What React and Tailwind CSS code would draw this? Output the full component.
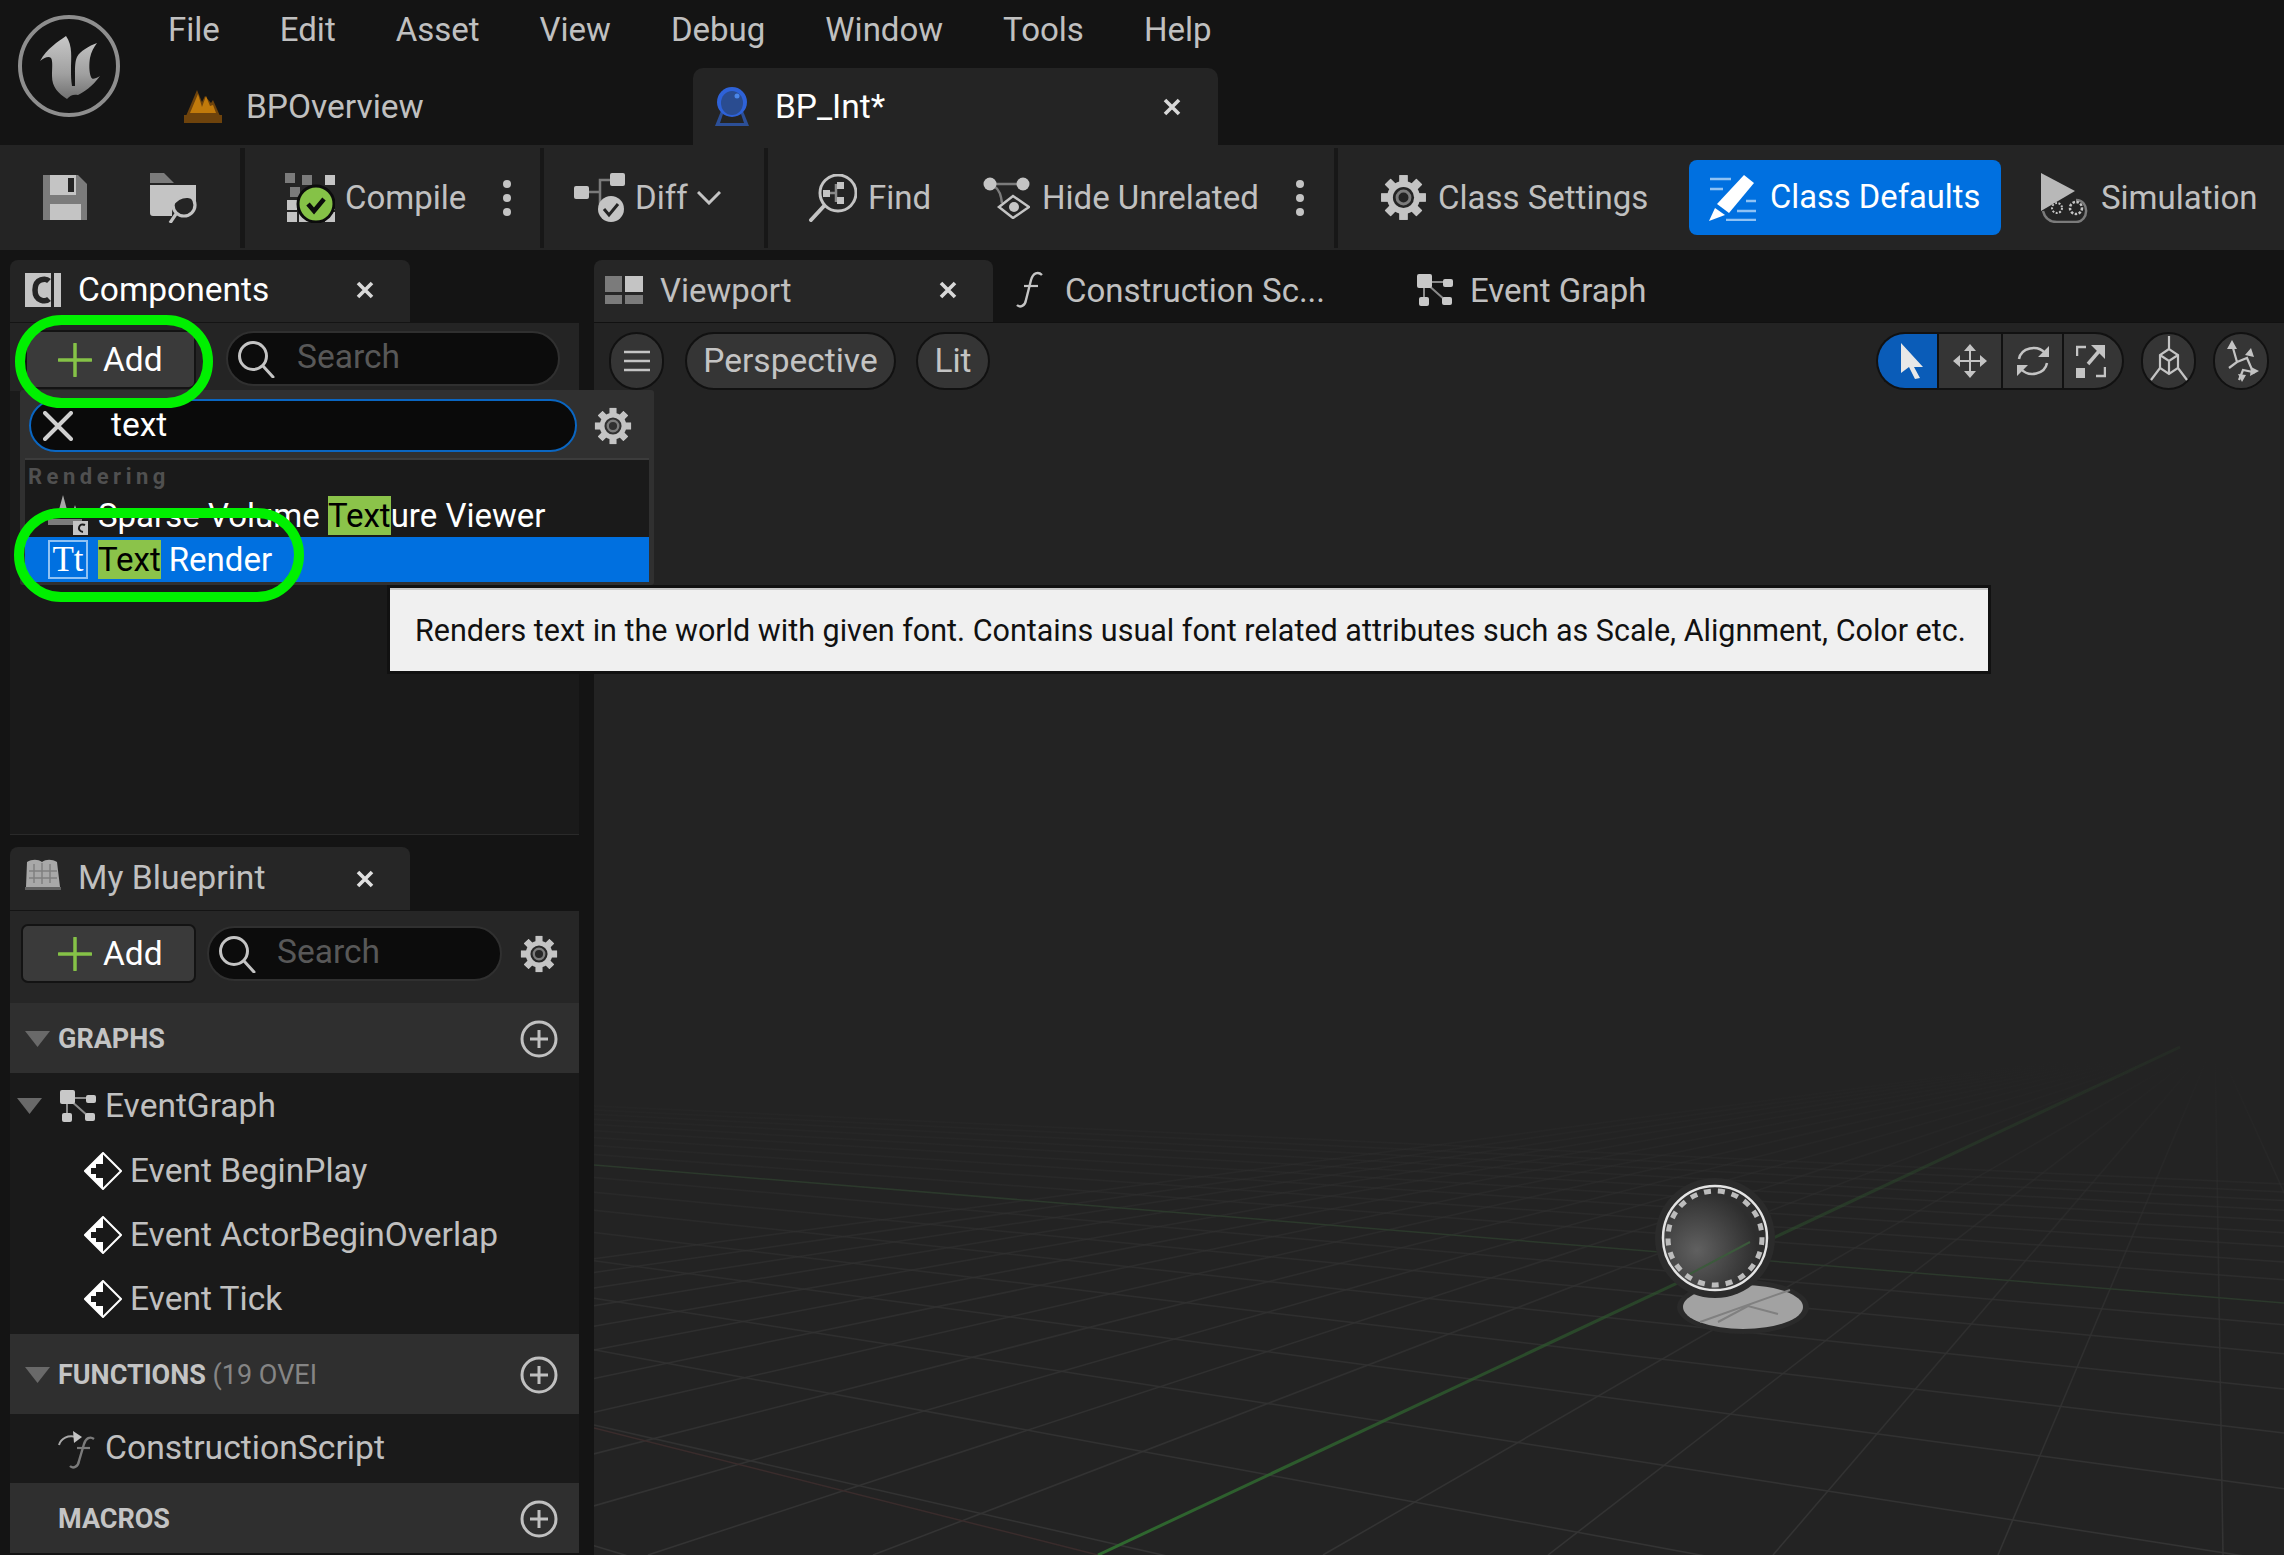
import React from 'react';

const Gear = ({ size = 40, color = '#c4c4c4', hub = '#242424' }) => (
  <svg width={size} height={size} viewBox="0 0 40 40" className="shrink-0">
    {[0, 45, 90, 135, 180, 225, 270, 315].map((a) => (
      <rect key={a} x="16.5" y="1" width="7" height="38" fill={color} transform={`rotate(${a} 20 20)`} />
    ))}
    <circle cx="20" cy="20" r="14" fill={color} />
    <circle cx="20" cy="20" r="9" fill={hub} />
    <circle cx="20" cy="20" r="5.5" fill="none" stroke="#7c7c7c" strokeWidth="2.5" />
  </svg>
);

const Magnifier = ({ size = 38 }) => (
  <svg width={size} height={size} viewBox="0 0 38 38" fill="none" stroke="#c4c4c4" strokeWidth="3" className="shrink-0">
    <circle cx="16" cy="16" r="13.5" />
    <path d="M26 26l10 11" strokeLinecap="round" />
  </svg>
);

const PlusIcon = () => (
  <svg width="34" height="34" viewBox="0 0 34 34" className="shrink-0">
    <path d="M17 1v32M1 17h32" stroke="#85c247" strokeWidth="3.5" strokeLinecap="round" />
  </svg>
);

const Dots = () => (
  <svg width="10" height="38" viewBox="0 0 10 38" className="shrink-0">
    <circle cx="5" cy="5" r="4" fill="#c4c4c4" />
    <circle cx="5" cy="19" r="4" fill="#c4c4c4" />
    <circle cx="5" cy="33" r="4" fill="#c4c4c4" />
  </svg>
);

const CloseX = ({ color = '#d8d8d8' }) => (
  <svg width="18" height="18" viewBox="0 0 18 18" className="shrink-0">
    <path d="M2 2l14 14M16 2L2 16" stroke={color} strokeWidth="3.6" />
  </svg>
);

const Triangle = () => (
  <svg width="25" height="16" viewBox="0 0 25 16" className="shrink-0">
    <path d="M0 0h25L12.5 16z" fill="#696969" />
  </svg>
);

const AddCircle = () => (
  <svg width="38" height="38" viewBox="0 0 38 38" fill="none" className="shrink-0">
    <circle cx="19" cy="19" r="17" stroke="#c0c0c0" strokeWidth="3" />
    <path d="M19 10v18M10 19h18" stroke="#c0c0c0" strokeWidth="3" />
  </svg>
);

const GraphIcon = ({ w = 36, h = 32 }) => (
  <svg width={w} height={h} viewBox="0 0 36 32" className="shrink-0">
    <path d="M8 8h24M7 10v14M10 10l18 16" stroke="#8a8a8a" strokeWidth="2" fill="none" />
    <rect x="0" y="0" width="15" height="14" rx="2" fill="#c8c8c8" />
    <rect x="26" y="5" width="10" height="8" rx="2" fill="#c8c8c8" />
    <rect x="2" y="23" width="10" height="9" rx="2" fill="#c8c8c8" />
    <rect x="25" y="23" width="10" height="8" rx="2" fill="#c8c8c8" />
  </svg>
);

const EventDiamond = () => (
  <svg width="38" height="38" viewBox="0 0 38 38" className="shrink-0">
    <path d="M19 1l18 18-18 18L1 19z" fill="#191919" stroke="#fff" strokeWidth="2" />
    <path d="M19 1L1 19l18 18V26h-7v-4H7v-6h5v-4h7z" fill="#fff" />
  </svg>
);

const FunctionF = ({ color = '#c4c4c4', w = 30, h = 38 }) => (
  <svg width={w} height={h} viewBox="0 0 30 38" fill="none" stroke={color} className="shrink-0">
    <path d="M27 4c-4-4-9-2-11 5l-5 20c-1 6-6 8-9 5" strokeWidth="2.4" />
    <path d="M9 15h14" strokeWidth="2.2" />
  </svg>
);

const BlueprintBall = () => (
  <svg width="40" height="40" viewBox="0 0 40 40" className="shrink-0">
    <path d="M9 24L3 39h34l-6-15z" fill="#2c4f97" />
    <path d="M11 27L8 36h24l-3-9z" fill="#242424" />
    <circle cx="20" cy="15" r="15" fill="#2e62d8" />
    <ellipse cx="20" cy="16" rx="11" ry="12" fill="#2a4c90" />
    <circle cx="25" cy="9" r="2.5" fill="#4a86ea" />
  </svg>
);

const LevelIcon = () => (
  <svg width="40" height="34" viewBox="0 0 40 34" className="shrink-0">
    <path d="M3 26L14 0l5 12 3-6 6 7 2-3 7 16z" fill="#6e430c" />
    <path d="M7 23L15 4l4 13 4-11 4 10 3-1 3 8z" fill="#c17a0b" />
    <path d="M1 25h38v8H1z" fill="#6e430c" />
  </svg>
);

const Logo = () => (
  <svg width="104" height="104" viewBox="0 0 104 104" className="shrink-0">
    <defs>
      <linearGradient id="logoFill" x1="0" y1="0" x2="0" y2="1">
        <stop offset="0" stopColor="#c8c8c8" />
        <stop offset="0.6" stopColor="#a0a0a0" />
        <stop offset="1" stopColor="#707070" />
      </linearGradient>
    </defs>
    <circle cx="52" cy="52" r="49" fill="#151515" stroke="#8e8e8e" strokeWidth="4" />
    <path
      d="M49 22C41 28 30 34 23 47C28 43 32 42 34 44C36 47 35 54 35 62C35 73 41 79 50 85C53 81 57 80 61 81C67 78 75 73 83 62C78 65 75 66 74 63C72 58 72 50 73 44C74 38 77 33 80 29C72 32 63 37 60 43C58 47 58 54 58 60L58 72L55 72C54 66 54 62 54 56C54 44 56 32 49 22Z"
      fill="url(#logoFill)"
    />
  </svg>
);

const SaveIcon = () => (
  <svg width="44" height="45" viewBox="0 0 44 45" className="shrink-0">
    <path d="M0 0h35l9 9v36H0z" fill="#7b7b7b" />
    <path d="M7 0h26v20H7z" fill="#c4c4c4" />
    <path d="M25 3h6v14h-6z" fill="#242424" />
    <path d="M7 29h31v16H7z" fill="#c4c4c4" />
  </svg>
);

const BrowseIcon = () => (
  <svg width="50" height="50" viewBox="0 0 50 50" fill="none" className="shrink-0">
    <path d="M0 0h14l10 10H0z" fill="#7b7b7b" />
    <path d="M0 12h46v16a15 15 0 0 0-24 14v1H3a3 3 0 0 1-3-3z" fill="#c4c4c4" />
    <circle cx="34" cy="32" r="11" stroke="#c4c4c4" strokeWidth="3.2" />
    <path d="M26 41l-6 9" stroke="#c4c4c4" strokeWidth="3.2" />
  </svg>
);

const CompileIcon = () => (
  <svg width="50" height="50" viewBox="0 0 50 50" className="shrink-0">
    {[
      [0, 0, '#7b7b7b'], [17, 2, '#7b7b7b'], [40, 2, '#c4c4c4'],
      [5, 14, '#7b7b7b'], [2, 27, '#c4c4c4'], [2, 39, '#c4c4c4'], [40, 27, '#c4c4c4'], [40, 39, '#c4c4c4'], [14, 39, '#c4c4c4'],
    ].map(([x, y, c]) => (
      <rect key={`${x}-${y}`} x={x} y={y} width="10" height="10" fill={c} />
    ))}
    <ellipse cx="31" cy="31" rx="18" ry="18" fill="#85c247" stroke="#0c0c0c" strokeWidth="3" />
    <path d="M23 31l6 7 10-12" stroke="#0c0c0c" strokeWidth="4.5" fill="none" />
  </svg>
);

const DiffIcon = () => (
  <svg width="51" height="50" viewBox="0 0 51 50" className="shrink-0">
    <path d="M14 19h12V7h12M26 19v12" stroke="#7b7b7b" strokeWidth="2.5" fill="none" />
    <rect x="0" y="13" width="15" height="13" rx="2" fill="#c4c4c4" />
    <rect x="36" y="0" width="15" height="13" rx="2" fill="#c4c4c4" />
    <circle cx="37" cy="36" r="13" fill="#c4c4c4" />
    <path d="M30 36l5 6 9-11" stroke="#242424" strokeWidth="3" fill="none" />
  </svg>
);

const FindIcon = () => (
  <svg width="49" height="48" viewBox="0 0 49 48" fill="none" className="shrink-0">
    <circle cx="30" cy="19" r="18" stroke="#c4c4c4" strokeWidth="3" />
    <path d="M16 32L3 46" stroke="#c4c4c4" strokeWidth="4" strokeLinecap="round" />
    <rect x="15" y="16" width="7" height="7" fill="#c4c4c4" />
    <path d="M22 19h6M28 10v18" stroke="#8a8a8a" strokeWidth="2.5" />
    <rect x="29" y="8" width="7" height="7" fill="#c4c4c4" />
    <rect x="29" y="23" width="7" height="7" fill="#c4c4c4" />
  </svg>
);

const HideIcon = () => (
  <svg width="47" height="42" viewBox="0 0 47 42" fill="none" className="shrink-0">
    <path d="M8 7h34M11 9c6 4 7 10 8 17" stroke="#7b7b7b" strokeWidth="2.5" />
    <circle cx="7" cy="7" r="6.5" fill="#c4c4c4" />
    <circle cx="40" cy="7" r="6.5" fill="#c4c4c4" />
    <path d="M16 30l14-11 16 11-16 11z" stroke="#c4c4c4" strokeWidth="2.5" />
    <circle cx="31" cy="30" r="5" fill="#c4c4c4" />
  </svg>
);

const ClassDefaultsIcon = () => (
  <svg width="49" height="46" viewBox="0 0 49 46" className="shrink-0">
    <g stroke="#8fc2f4" strokeWidth="2.4">
      <path d="M2 4h21M2 14h13M38 26h10M29 36h19M18 45h30" />
    </g>
    <path d="M36 0l10 8-25 30-12-9z" fill="#fff" />
    <path d="M7 33l10 7-16 6z" fill="#fff" />
  </svg>
);

const SimIcon = () => (
  <svg width="50" height="50" viewBox="0 0 50 50" fill="none" className="shrink-0">
    <path d="M1 0l34 18L1 38z" fill="#b8b8b8" />
    <path d="M3 38c2 8 8 11 14 11h19c13 0 14-22 0-22" stroke="#7b7b7b" strokeWidth="2.5" />
    <circle cx="17" cy="35" r="5.5" fill="#242424" />
    <circle cx="17" cy="35" r="5" stroke="#c4c4c4" strokeWidth="2" strokeDasharray="2 1.5" />
    <circle cx="36" cy="35" r="6" stroke="#c4c4c4" strokeWidth="2.5" strokeDasharray="2.5 1.5" />
  </svg>
);

const ComponentsIcon = () => (
  <svg width="36" height="36" viewBox="0 0 36 36" className="shrink-0">
    <path d="M0 1h36v34H0z" fill="#c4c4c4" />
    <path d="M24 9c-3-3-14-3-14 9s11 12 14 9" stroke="#242424" strokeWidth="5.5" fill="none" />
    <path d="M26 0h3v36h-3z" fill="#242424" />
  </svg>
);

const BookIcon = () => (
  <svg width="38" height="34" viewBox="0 0 38 34" className="shrink-0">
    <path d="M3 4c5-3 11-3 15 0 4-3 10-3 15 0l3 25H2z" fill="#a8a8a8" />
    <path d="M10 6v19M18 5v21M26 6v19M5 13h28M5 20h28" stroke="#808080" strokeWidth="1.5" />
    <path d="M1 29h36v3H1z" fill="#606060" />
  </svg>
);

const ViewportIcon = () => (
  <svg width="38" height="28" viewBox="0 0 38 28" className="shrink-0">
    <rect width="17" height="16" fill="#7b7b7b" />
    <rect x="20" width="18" height="16" fill="#c4c4c4" />
    <rect y="19" width="17" height="9" fill="#7b7b7b" />
    <rect x="20" y="19" width="18" height="9" fill="#7b7b7b" />
  </svg>
);

const ConstructionIcon = () => (
  <svg width="37" height="40" viewBox="0 0 37 40" fill="none" className="shrink-0">
    <path d="M1 16c2-7 9-10 17-8" stroke="#a8a8a8" strokeWidth="2" />
    <path d="M15 2l9 6-8 6z" fill="#c4c4c4" />
    <path d="M36 10c-4-3-8-1-10 5l-5 17c-1 6-6 8-9 5" stroke="#7b7b7b" strokeWidth="2.4" />
    <path d="M19 19h13" stroke="#7b7b7b" strokeWidth="2.2" />
  </svg>
);

const SparseIcon = () => (
  <svg width="42" height="40" viewBox="0 0 42 40" className="shrink-0">
    <path d="M15 0l6 22H9z" fill="#a8a8a8" />
    <path d="M27 10l4 12h-8z" fill="#a8a8a8" />
    <path d="M0 24h34v6H0z" fill="#7b7b7b" />
    <rect x="25" y="26" width="15" height="14" fill="#c4c4c4" />
    <path d="M37 30c-6-3-9 6-2 7" stroke="#1a1a1a" strokeWidth="2" fill="none" />
  </svg>
);

function Btn({ className = '', children }) {
  return (
    <div className={`bg-[#353535] border-2 border-[#111] flex items-center justify-center text-[#c4c4c4] ${className}`}>
      {children}
    </div>
  );
}

function AddButton({ className }) {
  return (
    <div className={`h-[59px] bg-[#3a3a3a] border-2 border-[#131313] rounded-[7px] flex items-center gap-[11px] text-white ${className}`}>
      <PlusIcon />
      <span>Add</span>
    </div>
  );
}

function SearchBox({ className, gap }) {
  return (
    <div className={`h-[55px] bg-[#0c0c0c] border-2 border-[#303030] rounded-full flex items-center pl-[9px] text-[#585858] ${className}`}>
      <Magnifier />
      <span className={`${gap} mb-[3px]`}>Search</span>
    </div>
  );
}

function SectionHeader({ height, arrow = true, children }) {
  return (
    <div className={`${height} bg-[#2f2f2f] flex items-center pl-[15px] pr-[21px] pt-[2px]`}>
      <div className="w-[33px]">{arrow && <Triangle />}</div>
      <div className="text-[27px] font-bold text-[#c4c4c4] flex-1 whitespace-nowrap">{children}</div>
      <AddCircle />
    </div>
  );
}

function EventRow({ label }) {
  return (
    <div className="h-[64px] flex items-center pl-[74px] gap-[8px] text-[#c0c0c0] text-[33.5px]">
      <EventDiamond />
      <span>{label}</span>
    </div>
  );
}

// perspective floor, page coordinates
function FloorGrid() {
  const vpA = [2215, 1040];
  const vpB = [-1155, 1025];
  const linesA = [];
  for (let k = -12; k <= 6; k++) {
    if (k === 0) continue;
    const bx = 1098 + 225 * k;
    linesA.push([vpA[0], vpA[1], bx, 1555]);
  }
  const linesB = [];
  for (let k = -9; k <= 9; k++) {
    if (k === 0) continue;
    const y = 1025 + 1 / (0.00714 - 0.00058 * k);
    const slope = (y - vpB[1]) / (594 - vpB[0]);
    linesB.push([594, y, 2284, y + slope * 1690]);
  }
  return (
    <svg className="absolute inset-0" width="1690" height="1232" viewBox="594 323 1690 1232">
      <defs>
        <linearGradient id="gridFade" gradientUnits="userSpaceOnUse" x1="0" y1="1060" x2="0" y2="1555">
          <stop offset="0" stopColor="#2f2f2f" stopOpacity="0" />
          <stop offset="0.5" stopColor="#303030" stopOpacity="0.85" />
          <stop offset="1" stopColor="#343434" />
        </linearGradient>
        <linearGradient id="greenFade" gradientUnits="userSpaceOnUse" x1="0" y1="1050" x2="0" y2="1555">
          <stop offset="0" stopColor="#2c4a2c" stopOpacity="0.2" />
          <stop offset="1" stopColor="#2f6a2f" />
        </linearGradient>
        <radialGradient id="ballFill" gradientUnits="userSpaceOnUse" cx="1697" cy="1250" r="60">
          <stop offset="0" stopColor="#606060" />
          <stop offset="1" stopColor="#2e2e2e" />
        </radialGradient>
      </defs>
      {linesA.map((l, i) => (
        <line key={i} x1={l[0]} y1={l[1]} x2={l[2]} y2={l[3]} stroke="url(#gridFade)" strokeWidth="1.5" />
      ))}
      {linesB.map((l, i) => (
        <line key={i} x1={l[0]} y1={l[1]} x2={l[2]} y2={l[3]} stroke="url(#gridFade)" strokeWidth="1.5" />
      ))}
      <line x1="594" y1="1428" x2="1098" y2="1555" stroke="#3a2c2c" strokeWidth="1.5" />
      <line x1="594" y1="1165" x2="2284" y2="1303" stroke="#2c392c" strokeWidth="1.5" />
      <line x1="1098" y1="1555" x2="2180" y2="1047" stroke="url(#greenFade)" strokeWidth="3" />
      <ellipse cx="1743" cy="1307" rx="66" ry="27" fill="#2a2a2a" />
      <ellipse cx="1743" cy="1307" rx="60" ry="22" fill="#a2a2a2" />
      <path d="M1718 1322l30-16 30 8M1700 1322l90-32" stroke="#808080" strokeWidth="2" fill="none" />
      <circle cx="1715" cy="1238" r="60" fill="#2b2b2b" />
      <circle cx="1715" cy="1238" r="53" fill="url(#ballFill)" />
      <circle cx="1715" cy="1238" r="52" fill="none" stroke="#e4e4e4" strokeWidth="2.5" />
      <circle cx="1715" cy="1238" r="47" fill="none" stroke="#bcbcbc" strokeWidth="5" strokeDasharray="7 7" />
      <path d="M1690 1274l60-32" stroke="#3c5a3c" strokeWidth="2" />
    </svg>
  );
}

export default function App() {
  return (
    <div className="relative w-[2284px] h-[1555px] overflow-hidden bg-[#141414] font-['Roboto',sans-serif] text-[33.5px] leading-none">
      {/* title bar */}
      <div className="h-[145px] flex">
        <div className="w-[168px] pl-[17px] pt-[14px]">
          <Logo />
        </div>
        <div className="flex-1 flex flex-col">
          <div className="h-[68px] flex items-center gap-[60px] text-[#c0c0c0] pb-[10px] text-[33px]">
            {['File', 'Edit', 'Asset', 'View', 'Debug', 'Window', 'Tools', 'Help'].map((m) => (
              <span key={m}>{m}</span>
            ))}
          </div>
          <div className="flex-1 flex">
            <div className="w-[525px] flex items-center pl-[15px] gap-[23px] text-[#c0c0c0] pt-[1px]">
              <LevelIcon />
              <span>BPOverview</span>
            </div>
            <div className="w-[525px] bg-[#242424] rounded-t-[10px] flex items-center pl-[19px] pr-[37px] text-white">
              <BlueprintBall />
              <span className="ml-[23px] flex-1">BP_Int*</span>
              <CloseX />
            </div>
          </div>
        </div>
      </div>

      {/* main toolbar */}
      <div className="h-[105px] bg-[#242424] flex items-center text-[#c0c0c0] text-[33px]">
        <div className="w-[240px] flex items-center pl-[43px] gap-[63px]">
          <SaveIcon />
          <BrowseIcon />
        </div>
        <div className="w-[5px] h-[100px] bg-[#171717]" />
        <div className="w-[295px] flex items-center pl-[40px] gap-[10px]">
          <CompileIcon />
          <span className="w-[147px]">Compile</span>
          <Dots />
        </div>
        <div className="w-[4px] h-[100px] bg-[#171717]" />
        <div className="w-[220px] flex items-center pl-[30px] gap-[10px]">
          <DiffIcon />
          <span className="w-[52px]">Diff</span>
          <svg width="24" height="14" viewBox="0 0 24 14" fill="none" stroke="#c4c4c4" strokeWidth="3">
            <path d="M1 1l11 11L23 1" />
          </svg>
        </div>
        <div className="w-[4px] h-[100px] bg-[#171717]" />
        <div className="w-[566px] flex items-center pl-[40px]">
          <FindIcon />
          <span className="ml-[11px] w-[115px]">Find</span>
          <HideIcon />
          <span className="ml-[12px] w-[253px]">Hide Unrelated</span>
          <Dots />
        </div>
        <div className="w-[4px] h-[100px] bg-[#171717]" />
        <div className="flex-1 flex items-center pl-[42px]">
          <Gear size={47} />
          <span className="ml-[11px] w-[251px]">Class Settings</span>
          <div className="w-[312px] h-[75px] bg-[#0070e0] rounded-[8px] flex items-center pl-[19px] gap-[13px] text-white">
            <ClassDefaultsIcon />
            <span className="text-[32.7px]">Class Defaults</span>
          </div>
          <div className="ml-[39px]">
            <SimIcon />
          </div>
          <span className="ml-[11px]">Simulation</span>
        </div>
      </div>

      <div className="h-[1305px] flex">
        {/* left column */}
        <div className="w-[594px] pl-[10px] pr-[15px] pt-[10px] flex flex-col">
          <div className="w-[400px] h-[62px] bg-[#242424] rounded-t-[8px] flex items-center pl-[15px] pr-[36px] text-white pb-[2px]">
            <ComponentsIcon />
            <span className="ml-[17px] flex-1">Components</span>
            <CloseX />
          </div>
          <div className="h-[68px] mt-[1px] bg-[#242424] flex items-start pt-[7px] pl-[15px] gap-[30px]">
            <AddButton className="w-[171px] pl-[31px]" />
            <SearchBox className="w-[334px] mt-[1px]" gap="ml-[22px]" />
          </div>
          <div className="h-[444px] bg-[#1a1a1a] border-b border-[#2a2a2a]" />

          <div className="w-[400px] h-[63px] mt-[12px] bg-[#262626] rounded-t-[8px] flex items-center pl-[14px] pr-[36px] text-[#c0c0c0] text-[33.7px]">
            <div className="mb-[8px]">
              <BookIcon />
            </div>
            <span className="ml-[16px] flex-1 mb-[2px]">My Blueprint</span>
            <CloseX color="#e0e0e0" />
          </div>
          <div className="h-[92px] mt-[1px] bg-[#262626] flex items-center pl-[11px] pr-[21px] pb-[7px]">
            <AddButton className="w-[175px] pl-[35px]" />
            <SearchBox className="w-[295px] ml-[11px]" gap="ml-[21px]" />
            <div className="ml-auto">
              <Gear size={38} hub="#262626" />
            </div>
          </div>
          <SectionHeader height="h-[70px]">GRAPHS</SectionHeader>
          <div className="h-[261px] bg-[#1a1a1a] text-[#c0c0c0]">
            <div className="h-[66px] flex items-center pl-[7px] gap-[18px] text-[33.5px]">
              <Triangle />
              <GraphIcon />
              <span className="ml-[-9px]">EventGraph</span>
            </div>
            <EventRow label="Event BeginPlay" />
            <EventRow label="Event ActorBeginOverlap" />
            <EventRow label="Event Tick" />
          </div>
          <SectionHeader height="h-[80px]">
            FUNCTIONS <span className="font-normal text-[#858585]">(19 OVEI</span>
          </SectionHeader>
          <div className="h-[69px] bg-[#1a1a1a] flex items-center pl-[48px] gap-[10px] text-[#c0c0c0] text-[33.7px]">
            <ConstructionIcon />
            <span className="mb-[2px]">ConstructionScript</span>
          </div>
          <SectionHeader height="h-[70px]" arrow={false}>MACROS</SectionHeader>
        </div>

        {/* viewport */}
        <div className="flex-1 flex flex-col">
          <div className="h-[72px] pt-[10px] flex text-[33px]">
            <div className="w-[399px] bg-[#262626] rounded-t-[8px] flex items-center pl-[11px] pr-[36px] text-[#c0c0c0] pb-[2px]">
              <ViewportIcon />
              <span className="ml-[17px] flex-1">Viewport</span>
              <CloseX />
            </div>
            <div className="w-[424px] flex items-center pl-[22px] text-[#c0c0c0] pb-[2px]">
              <FunctionF />
              <span className="ml-[20px]">Construction Sc...</span>
            </div>
            <div className="flex items-center text-[#c0c0c0] pb-[2px]">
              <GraphIcon />
              <span className="ml-[17px]">Event Graph</span>
            </div>
          </div>
          <div className="relative flex-1 bg-[#232323] border-t border-[#111]">
            <FloorGrid />
            <div className="relative flex pt-[9px] pl-[15px] h-[68px]">
              <Btn className="w-[55px] h-[58px] rounded-full">
                <svg width="28" height="24" viewBox="0 0 28 24" stroke="#c4c4c4" strokeWidth="2.5">
                  <path d="M1 3h26M1 12h26M1 21h26" />
                </svg>
              </Btn>
              <Btn className="w-[211px] h-[58px] rounded-full ml-[21px]">Perspective</Btn>
              <Btn className="w-[74px] h-[58px] rounded-full ml-[20px]">Lit</Btn>
              <div className="ml-[886px] flex h-[58px]">
                <div className="w-[61px] bg-[#0a5cb8] border-2 border-r-0 border-[#111] rounded-l-full flex items-center justify-center pl-[8px]">
                  <svg width="24" height="36" viewBox="0 0 24 36">
                    <path d="M1 0l22 24-9 0 6 11-5 1-6-12-8 6z" fill="#e8e8e8" />
                  </svg>
                </div>
                <div className="w-[64px] bg-[#353535] border-y-2 border-l-2 border-[#111] flex items-center justify-center">
                  <svg width="34" height="34" viewBox="0 0 34 34" fill="#c4c4c4" stroke="#c4c4c4">
                    <path d="M17 3v28M3 17h28" strokeWidth="2" />
                    <path d="M17 0l6 7H11zM17 34l6-7H11zM0 17l7-6v12zM34 17l-7-6v12z" stroke="none" />
                  </svg>
                </div>
                <div className="w-[61px] bg-[#353535] border-y-2 border-l-2 border-[#111] flex items-center justify-center">
                  <svg width="34" height="34" viewBox="0 0 34 34" fill="none" stroke="#c4c4c4" strokeWidth="2.5">
                    <path d="M3 15C5 4 21 0 29 9" />
                    <path d="M31 19c-2 11-18 15-26 6" />
                    <path d="M33 2v11H22zM1 32V21h11z" fill="#c4c4c4" stroke="none" />
                  </svg>
                </div>
                <div className="w-[62px] bg-[#353535] border-2 border-[#111] rounded-r-full flex items-center justify-start pl-[12px]">
                  <svg width="30" height="34" viewBox="0 0 30 34" fill="none" stroke="#c4c4c4" strokeWidth="2.5">
                    <path d="M1 12V3h9M20 32h9v-9" />
                    <path d="M12 20L24 6" strokeWidth="3.5" />
                    <path d="M15 1h14v14z" fill="#c4c4c4" stroke="none" />
                    <rect x="0" y="24" width="9" height="10" fill="#c4c4c4" stroke="none" />
                  </svg>
                </div>
              </div>
              <Btn className="w-[55px] h-[58px] rounded-full ml-[17px]">
                <svg width="38" height="50" viewBox="0 0 38 50" fill="none" stroke="#c4c4c4" strokeWidth="2.2">
                  <path d="M19 0v13M19 13l-9 6v13l9 6 9-6V19zM10 19l9 6 9-6M19 25v13M10 32L1 44M28 32l9 12" />
                </svg>
              </Btn>
              <Btn className="w-[56px] h-[58px] rounded-full ml-[17px]">
                <svg width="36" height="42" viewBox="0 0 36 42" fill="none" stroke="#c4c4c4" strokeWidth="2.2">
                  <path d="M10 8l4 14-8 6M14 22l10-4 6 14-10-2-4 10" />
                  <path d="M9 0l5 9H4zM28 8l3 9-9-2zM36 31l-9 5 1-9zM19 42l-4-8 8 1z" fill="#c4c4c4" stroke="none" />
                </svg>
              </Btn>
            </div>
          </div>
        </div>
      </div>

      {/* add component menu */}
      <div className="absolute left-[20px] top-[390px] w-[634px] h-[195px] bg-[#303030] rounded-[3px] px-[5px] flex flex-col">
        <div className="h-[68px] flex items-start pt-[9px] pl-[4px]">
          <div className="w-[548px] h-[53px] bg-[#0a0a0a] border-2 border-[#0a66c2] rounded-full flex items-center pl-[12px] text-white">
            <svg width="30" height="30" viewBox="0 0 30 30" stroke="#d0d0d0" strokeWidth="4" strokeLinecap="round">
              <path d="M2 2l26 26M28 2L2 28" />
            </svg>
            <span className="ml-[38px] mb-[2px]">text</span>
          </div>
          <div className="ml-[17px] mt-[8px]">
            <Gear size={38} hub="#303030" />
          </div>
        </div>
        <div className="h-[122px] bg-[#1a1a1a] border-t-2 border-[#3c3c3c]">
          <div className="h-[33px] pl-[3px] flex items-center text-[22px] font-bold tracking-[4.5px] text-[#505050]">Rendering</div>
          <div className="h-[44px] flex items-center pl-[23px] text-white text-[33px]">
            <SparseIcon />
            <span className="ml-[8px] whitespace-pre">Sparse Volume </span>
            <span className="bg-[#8bc34a] text-black h-[39px] flex items-center">Text</span>
            <span>ure Viewer</span>
          </div>
          <div className="h-[45px] bg-[#0070e0] flex items-center pl-[23px] text-white text-[33px]">
            <div className="w-[40px] h-[39px] border-2 border-[#8fc2f4] flex items-center justify-center font-['Liberation_Serif',serif] text-[35px]">Tt</div>
            <span className="ml-[10px] bg-[#8bc34a] text-black h-[39px] flex items-center">Text</span>
            <span className="ml-[8px]">Render</span>
          </div>
        </div>
      </div>

      {/* tooltip */}
      <div className="absolute left-[390px] top-[588px] w-[1598px] h-[83px] bg-[#f0f0f0] border-t-2 border-[#c8c8c8] shadow-[0_0_0_3px_#111] flex items-center pl-[25px] pt-[2px] text-[30.5px] text-[#111] whitespace-nowrap">
        Renders text in the world with given font. Contains usual font related attributes such as Scale, Alignment, Color etc.
      </div>

      {/* green annotation rings */}
      <div className="absolute left-[15px] top-[315px] w-[198px] h-[93px] border-[10px] border-[#00f000] rounded-[50px]" />
      <div className="absolute left-[14px] top-[508px] w-[290px] h-[94px] border-[10px] border-[#00f000] rounded-[50px]" />
    </div>
  );
}
